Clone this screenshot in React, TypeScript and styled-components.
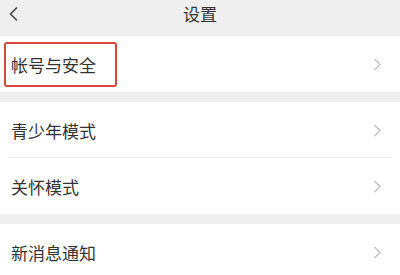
import React from 'react'
import styled, { createGlobalStyle } from 'styled-components'

const GlobalStyle = createGlobalStyle`
  html, body {
    margin: 0;
    padding: 0;
    background: #efefef;
    font-family: "Noto Sans CJK SC", "Noto Sans", sans-serif;
    color: #333;
  }
`

const Page = styled.div`
  width: 400px;
  height: 275px;
  overflow: hidden;
  background: #efefef;
`

const Header = styled.div`
  height: 36px;
  display: flex;
  align-items: center;
  justify-content: center;
  position: relative;
`

const BackButton = styled.span`
  position: absolute;
  left: 8px;
  top: 6px;
  width: 12px;
  height: 16px;
  display: flex;
`

const Title = styled.h1`
  margin: 0;
  font-size: 17px;
  font-weight: 400;
  line-height: 1;
  color: #333;
  margin-top: -9px;
`

const Group = styled.div`
  background: #fff;
  margin-bottom: 10px;
`

const Row = styled.div<{ $divider?: boolean }>`
  height: 56px;
  display: flex;
  align-items: center;
  justify-content: space-between;
  padding: 0 18px 0 11px;
  position: relative;
  box-sizing: border-box;
  ${(p) =>
    p.$divider &&
    `
    &::after {
      content: '';
      position: absolute;
      left: 8px;
      right: 8px;
      bottom: 0;
      height: 1px;
      background: #ececec;
    }
  `}
`

const Label = styled.span<{ $highlight?: boolean }>`
  font-size: 17px;
  line-height: 1;
  color: #333;
  position: relative;
  ${(p) =>
    p.$highlight &&
    `
    &::before {
      content: '';
      position: absolute;
      left: -7px;
      top: -14px;
      width: 113px;
      height: 45px;
      border: 2px solid #d9473a;
      border-radius: 3px;
      box-sizing: border-box;
    }
  `}
`

const Chevron = () => (
  <svg width="9" height="13" viewBox="0 0 9 13">
    <path d="M1.5 1 L7 6.5 L1.5 12" fill="none" stroke="#bdbdbd" strokeWidth="1.2" />
  </svg>
)

const items: { label: string; highlight?: boolean }[][] = [
  [{ label: '帐号与安全', highlight: true }],
  [{ label: '青少年模式' }, { label: '关怀模式' }],
  [{ label: '新消息通知' }],
]

export default function App() {
  return (
    <Page>
      <GlobalStyle />
      <Header>
        <BackButton>
          <svg width="12" height="16" viewBox="0 0 12 16">
            <path d="M9 1.5 L2.5 8 L9 14.5" fill="none" stroke="#444" strokeWidth="1.6" />
          </svg>
        </BackButton>
        <Title>设置</Title>
      </Header>
      {items.map((group, gi) => (
        <Group key={gi}>
          {group.map((item, i) => (
            <Row key={item.label} $divider={i < group.length - 1}>
              <Label $highlight={item.highlight}>{item.label}</Label>
              <Chevron />
            </Row>
          ))}
        </Group>
      ))}
    </Page>
  )
}
